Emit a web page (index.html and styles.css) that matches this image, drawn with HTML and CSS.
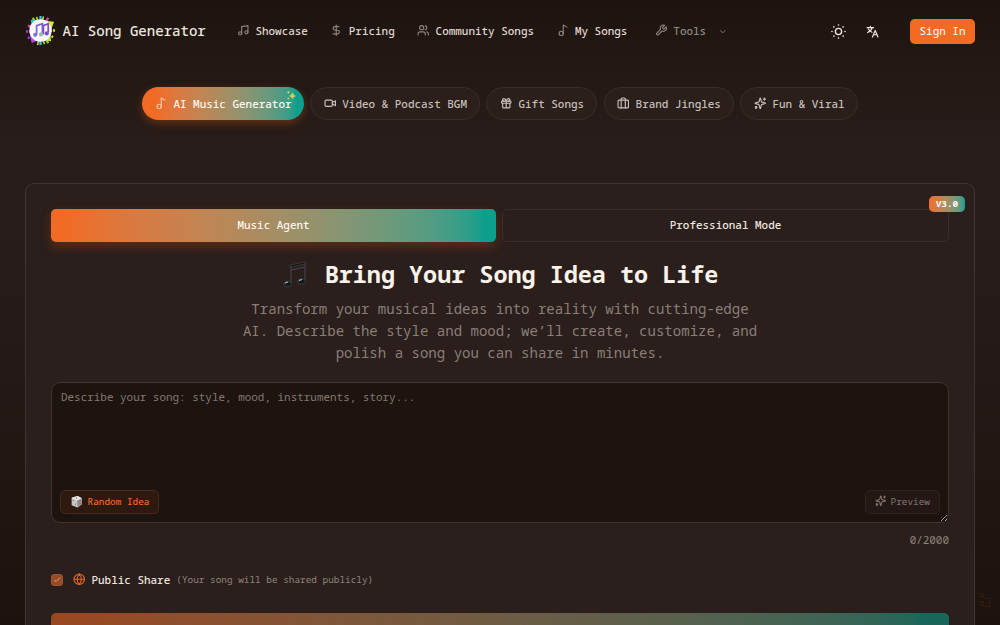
FILE: index.html
```html
<!DOCTYPE html>
<html lang="en">
<head>
  <meta charset="UTF-8">
  <meta name="viewport" content="width=device-width, initial-scale=1.0">
  <title>AI Song Generator</title>
  <link rel="stylesheet" href="styles.css">
</head>
<body>
  <header class="header">
    <a class="brand">
      <svg class="logo" viewBox="0 0 32 32">
        <g fill="none" stroke-width="2.4">
          <path d="M16 1v5M16 26v5" stroke="#29c5e8"/>
          <path d="M8 3l3 5M24 29l-3-5" stroke="#8bd63f"/>
          <path d="M24 3l-3 5M3 11l5 2" stroke="#e53fa8"/>
          <path d="M1 17h5M3 24l5-3" stroke="#b23be0" stroke-dasharray="2 1"/>
          <path d="M31 16h-5M29 23l-5-3" stroke="#d8e23c" stroke-dasharray="2 1"/>
          <path d="M19 1.500l-1 4M12 2l1 4M13 31l1-5M20 30l-1-4" stroke="#d7e53a" stroke-width="1.500"/>
        </g>
        <path d="M6 5l7 1-6 6z" fill="#24c8d8"/>
        <path d="M21 6l9 1-3 8z" fill="#d4e637"/>
        <path d="M5 21l2 8 7-3z" fill="#a74be8"/>
        <path d="M26 20l1 7-8-1z" fill="#c4e43c"/>
        <circle cx="16" cy="16" r="11.500" fill="#fbf7ff"/>
        <g fill="none" stroke-width="1.800">
          <path d="M12 20v-9l6-2v10" stroke="#7a63cf"/>
          <path d="M19 20v-9l5-2v9" stroke="#8a4bc4"/>
        </g>
        <circle cx="10.500" cy="20.500" r="2.100" fill="#7f74cf"/>
        <circle cx="16.500" cy="20" r="2.100" fill="#8fc0a0"/>
        <circle cx="22.500" cy="19" r="2.100" fill="#6b52c8"/>
      </svg>
      <span>AI Song Generator</span>
    </a>
    <nav class="nav">
      <a class="nav-link"><svg class="icon" viewBox="0 0 24 24"><path d="M9 18V5l12-2v13"/><circle cx="6" cy="18" r="3"/><circle cx="18" cy="16" r="3"/></svg>Showcase</a>
      <a class="nav-link"><svg class="icon" viewBox="0 0 24 24"><path d="M12 2v20M17 5H9.500a3.500 3.500 0 0 0 0 7h5a3.500 3.500 0 0 1 0 7H6"/></svg>Pricing</a>
      <a class="nav-link"><svg class="icon" viewBox="0 0 24 24"><path d="M16 21v-2a4 4 0 0 0-4-4H6a4 4 0 0 0-4 4v2"/><circle cx="9" cy="7" r="4"/><path d="M22 21v-2a4 4 0 0 0-3-3.870M16 3.130a4 4 0 0 1 0 7.750"/></svg>Community Songs</a>
      <a class="nav-link"><svg class="icon" viewBox="0 0 24 24"><circle cx="8" cy="18" r="4"/><path d="M12 18V2l7 4"/></svg>My Songs</a>
      <a class="nav-link tools"><svg class="icon" viewBox="0 0 24 24"><path d="M14.700 6.300a1 1 0 0 0 0 1.400l1.600 1.600a1 1 0 0 0 1.400 0l3.770-3.770a6 6 0 0 1-7.940 7.940l-6.910 6.910a2.120 2.120 0 0 1-3-3l6.910-6.910a6 6 0 0 1 7.940-7.940l-3.760 3.760z"/></svg>Tools<svg class="chevron" viewBox="0 0 24 24"><path d="M6 9l6 6 6-6"/></svg></a>
    </nav>
    <div class="actions">
      <svg class="action-icon sun" viewBox="0 0 24 24"><circle cx="12" cy="12" r="5"/><path class="dots" d="M12 1.500v.1M12 22.400v.1M1.500 12h.1M22.400 12h.1M4.600 4.600v.1M19.400 4.600v.1M4.600 19.400v.1M19.400 19.400v.1"/></svg>
      <svg class="action-icon" viewBox="0 0 24 24"><path d="M2 5h12M8 2.500V5M11.500 5C10.500 9 7 12 3 14M4.500 7.500c1.500 3 4 5 6.500 6M12 22l5-12 5 12M13.800 18h6.400"/></svg>
      <button class="sign-in">Sign In</button>
    </div>
  </header>

  <div class="categories">
    <button class="category active"><svg class="icon" viewBox="0 0 24 24"><circle cx="8" cy="18" r="4"/><path d="M12 18V2l7 4"/></svg>AI Music Generator
      <svg class="spark" viewBox="0 0 24 24"><path d="M14 5q1 6 8 8-7 1-8 8-1-7-8-8 7-2 8-8z"/><path d="M5 1q.5 3 4 4-3.500.5-4 4-.5-3.500-4-4 3.500-1 4-4zM5 16q.3 2.500 3 3-2.700.5-3 3-.3-2.500-3-3 2.700-.5 3-3z"/></svg>
    </button>
    <button class="category"><svg class="icon" viewBox="0 0 24 24"><rect x="2" y="6" width="14" height="12" rx="2"/><path d="M16 13l5.200 3.500a.5.5 0 0 0 .8-.4V7.900a.5.5 0 0 0-.8-.4L16 10.500"/></svg>Video &amp; Podcast BGM</button>
    <button class="category"><svg class="icon" viewBox="0 0 24 24"><rect x="3" y="8" width="18" height="4" rx="1"/><path d="M12 8v13M19 12v7a2 2 0 0 1-2 2H7a2 2 0 0 1-2-2v-7M7.500 8a2.500 2.500 0 0 1 0-5A4.800 8 0 0 1 12 8a4.800 8 0 0 1 4.500-5 2.500 2.500 0 0 1 0 5"/></svg>Gift Songs</button>
    <button class="category"><svg class="icon" viewBox="0 0 24 24"><rect x="2" y="6" width="20" height="15" rx="2"/><path d="M16 21V4a2 2 0 0 0-2-2h-4a2 2 0 0 0-2 2v17"/></svg>Brand Jingles</button>
    <button class="category"><svg class="icon" viewBox="0 0 24 24"><path d="M9.940 15.500A2 2 0 0 0 8.500 14.060l-6.140-1.580a.5.5 0 0 1 0-.96L8.500 9.940A2 2 0 0 0 9.940 8.500l1.580-6.140a.5.5 0 0 1 .96 0L14.060 8.500A2 2 0 0 0 15.500 9.940l6.140 1.580a.5.5 0 0 1 0 .96L15.500 14.060a2 2 0 0 0-1.440 1.440l-1.580 6.140a.5.5 0 0 1-.96 0zM20 2v4M22 4h-4M4 18v3"/><circle cx="4" cy="20" r="1.500"/></svg>Fun &amp; Viral</button>
  </div>

  <main class="card">
    <div class="tabs">
      <button class="tab active">Music Agent</button>
      <button class="tab">Professional Mode<span class="badge">V3.0</span></button>
    </div>

    <h1 class="title">
      <svg class="notes" viewBox="0 0 28 28">
        <path d="M9 23V6l14-3v17M9 10l14-3" fill="none" stroke="#45484a" stroke-width="1"/>
        <path d="M8 5l15-3v2L8 7z" fill="#11100f" stroke="#474a4b" stroke-width=".6"/>
        <ellipse cx="5.500" cy="24" rx="4" ry="2.800" fill="#15191a" stroke="#3d4548" stroke-width=".8"/>
        <ellipse cx="19.500" cy="21.500" rx="4" ry="2.800" fill="#15191a" stroke="#3d4548" stroke-width=".8"/>
        <path d="M3 23.500q1-1.500 3-1.300M17 21q1-1.500 3-1.300" fill="none" stroke="#9fb1b7" stroke-width="1.300"/>
      </svg>
      <span>Bring Your Song Idea to Life</span>
    </h1>
    <p class="subtitle">Transform your musical ideas into reality with cutting-edge AI. Describe the style and mood; we’ll create, customize, and polish a song you can share in minutes.</p>

    <div class="prompt">
      <textarea class="prompt-input" placeholder="Describe your song: style, mood, instruments, story..."></textarea>
      <button class="chip random">
        <svg class="die" viewBox="0 0 24 24"><path d="M3 5l11-3 8 4v11l-8 6-11-4z" fill="#c9c7c5"/><path d="M3 5l11-3 8 4-9 4z" fill="#ebe9e7"/><path d="M13 10l9-4v11l-8 6z" fill="#8f8c8a"/><g fill="#77716d"><circle cx="12" cy="5.500" r="1.300"/><circle cx="6" cy="10" r="1.100"/><circle cx="10" cy="17" r="1.100"/><circle cx="17" cy="12" r="1"/><circle cx="19" cy="16" r="1"/></g></svg>
        Random Idea
      </button>
      <button class="chip preview">
        <svg class="icon" viewBox="0 0 24 24"><path d="M9.940 15.500A2 2 0 0 0 8.500 14.060l-6.140-1.580a.5.5 0 0 1 0-.96L8.500 9.940A2 2 0 0 0 9.940 8.500l1.580-6.140a.5.5 0 0 1 .96 0L14.060 8.500A2 2 0 0 0 15.500 9.940l6.140 1.580a.5.5 0 0 1 0 .96L15.500 14.060a2 2 0 0 0-1.440 1.440l-1.580 6.140a.5.5 0 0 1-.96 0zM20 2v4M22 4h-4M4 18v3"/><circle cx="4" cy="20" r="1.500"/></svg>
        Preview
      </button>
    </div>
    <div class="counter">0/2000</div>

    <div class="share">
      <span class="checkbox"><svg viewBox="0 0 24 24"><path d="M20 6L9 17l-5-5"/></svg></span>
      <svg class="icon globe" viewBox="0 0 24 24"><circle cx="12" cy="12" r="10"/><path d="M12 2a14.500 14.500 0 0 0 0 20 14.500 14.500 0 0 0 0-20M2 12h20"/></svg>
      <span class="share-label">Public Share</span>
      <span class="share-hint">(Your song will be shared publicly)</span>
    </div>

    <button class="generate"></button>
  </main>
  <svg class="float-note" viewBox="0 0 24 24"><path d="M9 18V5l12-2v13"/><circle cx="6" cy="18" r="3"/><circle cx="18" cy="16" r="3"/></svg>
</body>
</html>
```

FILE: styles.css
```css
* {
  box-sizing: border-box;
}
body {
  display: flex;
  flex-direction: column;
  margin: 0;
  height: 625px;
  overflow: hidden;
  background: linear-gradient(180deg, #1d140f 0, #281d1a 150px, #271c19 260px, #1c120e 625px);
  color: #f0e6df;
  font-family: "Noto Sans Mono", "DejaVu Sans Mono", monospace;
  font-size: 10.94px;
}
button {
  font: inherit;
  color: inherit;
  border: none;
  padding: 0;
  cursor: pointer;
}
svg {
  flex: none;
}
.icon, .chevron, .action-icon, .checkbox svg {
  fill: none;
  stroke: currentColor;
  stroke-width: 2.2;
  stroke-linecap: round;
  stroke-linejoin: round;
}
.icon {
  width: 12.5px;
  height: 12.5px;
}

/* header */
.header {
  display: flex;
  flex: none;
  align-items: center;
  height: 62px;
  padding: 0 25px;
}
.brand {
  display: flex;
  align-items: center;
  gap: 6.5px;
  width: 212px;
  padding-bottom: 1px;
  font-size: 14.06px;
  font-weight: 500;
  white-space: nowrap;
}
.logo {
  width: 31px;
  height: 31px;
}
.nav {
  display: flex;
  gap: 22.5px;
  padding-bottom: 1px;
}
.nav-link {
  display: flex;
  align-items: center;
  gap: 5.9px;
  font-weight: 500;
  color: #e2d9d2;
  white-space: nowrap;
}
.nav-link .icon {
  color: #8d837d;
}
.tools {
  margin-left: 5px;
  color: #91867f;
}
.chevron {
  width: 9.4px;
  height: 9.4px;
  margin: 2px 0 0 6px;
}
.actions {
  display: flex;
  align-items: center;
  margin-left: auto;
}
.action-icon {
  width: 15px;
  height: 15px;
  margin-right: 20px;
}
.action-icon + .action-icon {
  width: 13px;
  height: 13px;
  margin-right: 31px;
}
.sun .dots {
  stroke-width: 2.6;
}
.sign-in {
  width: 65px;
  height: 25px;
  padding-bottom: 1px;
  border-radius: 4.7px;
  background: #f16b24;
  color: #fdf0e5;
  font-weight: 500;
}

/* category pills */
.categories {
  display: flex;
  flex: none;
  justify-content: center;
  gap: 6.25px;
  margin-top: 25px;
}
.category {
  position: relative;
  display: flex;
  align-items: center;
  gap: 6.25px;
  height: 33px;
  padding: 0 12.25px;
  border: 1px solid #382d29;
  border-radius: 17px;
  background: #2a1f1b;
  color: #c9bfb8;
  font-weight: 500;
  white-space: nowrap;
}
.category.active {
  padding: 0 12.5px;
  border: none;
  background: linear-gradient(90deg in oklab, #f16b24 8%, #0d9f8c 95%);
  color: #fff8f0;
  box-shadow: 0 3px 9px rgba(234, 88, 12, 0.35);
}
.category.active .icon {
  opacity: 0.65;
}
.spark {
  position: absolute;
  top: 3px;
  right: 7px;
  width: 11px;
  height: 11px;
  fill: #d9d34c;
}

/* generator card */
.card {
  flex: 1;
  min-height: 0;
  margin: 63px 25px 0;
  padding: 25px 25px 0;
  border: 1px solid #40342f;
  border-bottom: none;
  border-radius: 9px 9px 0 0;
  background: #2a1f1c;
  overflow: hidden;
}
.tabs {
  display: flex;
  gap: 6px;
}
.tab {
  position: relative;
  flex: 1;
  height: 33px;
  padding-bottom: 2px;
  border: 1px solid #3a2e2a;
  border-radius: 5px;
  background: transparent;
  color: #f0e7df;
  font-weight: 500;
}
.tab.active {
  border: none;
  background: linear-gradient(90deg in oklab, #f16b24 3%, #0d9f8c 97%);
  color: #fff8f0;
  box-shadow: 0 5px 11px rgba(234, 88, 12, 0.25);
}
.badge {
  position: absolute;
  top: -14px;
  right: -17px;
  width: 36px;
  height: 16px;
  border-radius: 4.7px;
  background: linear-gradient(90deg in oklab, #f16b24, #0d9f8c);
  color: #fff8f0;
  font-size: 9.4px;
  font-weight: 700;
  line-height: 16px;
}
.title {
  display: flex;
  align-items: center;
  justify-content: center;
  gap: 15px;
  height: 32px;
  margin: 16px 0 0;
  font-size: 23.44px;
  font-weight: 700;
  color: #faf1e9;
}
.notes {
  width: 28px;
  height: 28px;
}
.subtitle {
  width: 525px;
  margin: 8px auto 0;
  font-size: 14.06px;
  line-height: 21.9px;
  text-align: center;
  color: #8a7e77;
}
.prompt {
  position: relative;
  display: flex;
  margin-top: 18px;
}
.prompt-input {
  width: 100%;
  height: 141px;
  padding: 5px 9px;
  border: 1px solid #40342f;
  border-radius: 9px;
  outline: none;
  background: #1d130f;
  color: #f5ede6;
  font: inherit;
  line-height: 17px;
  resize: vertical;
}
.prompt-input::placeholder {
  color: #84776f;
}
.chip {
  position: absolute;
  bottom: 9px;
  display: flex;
  align-items: center;
  height: 24px;
  padding-bottom: 1px;
  border: 1px solid #46291b;
  border-radius: 5px;
  font-size: 9.38px;
  white-space: nowrap;
}
.random {
  left: 9px;
  gap: 4.5px;
  padding: 0 9px 1px;
  background: #2e190f;
  color: #e96822;
  font-weight: 500;
}
.die {
  width: 13px;
  height: 13px;
}
.preview {
  right: 9px;
  gap: 4px;
  padding: 0 9px 1px;
  border-color: #30221d;
  background: #231815;
  color: #83776f;
}
.preview .icon {
  width: 11.5px;
  height: 11.5px;
}
.counter {
  margin-top: 9px;
  line-height: 16px;
  text-align: right;
  color: #8f837b;
}
.share {
  display: flex;
  align-items: center;
  height: 16px;
  margin-top: 24px;
}
.checkbox {
  display: flex;
  width: 12px;
  height: 12px;
  padding: 1px;
  border: 1px solid #9a5730;
  border-radius: 3px;
  background: #9a4a20;
  color: #b9aaa0;
}
.checkbox svg {
  width: 8px;
  height: 8px;
  stroke-width: 3;
}
.globe {
  margin: 0 6px 0 10px;
  color: #e76722;
}
.share-label {
  font-weight: 500;
}
.share-hint {
  margin-left: 6px;
  font-size: 9.38px;
  color: #8f837b;
}
.generate {
  display: block;
  width: 100%;
  height: 38px;
  margin-top: 25px;
  border-radius: 5px;
  background: linear-gradient(90deg in oklab, #f16b24 3%, #0d9f8c 97%);
  opacity: 0.55;
}
.float-note {
  position: absolute;
  right: 7px;
  bottom: 17px;
  width: 16px;
  height: 16px;
  fill: none;
  stroke: #2f1c10;
  stroke-width: 2;
  transform: rotate(100deg);
}
```
